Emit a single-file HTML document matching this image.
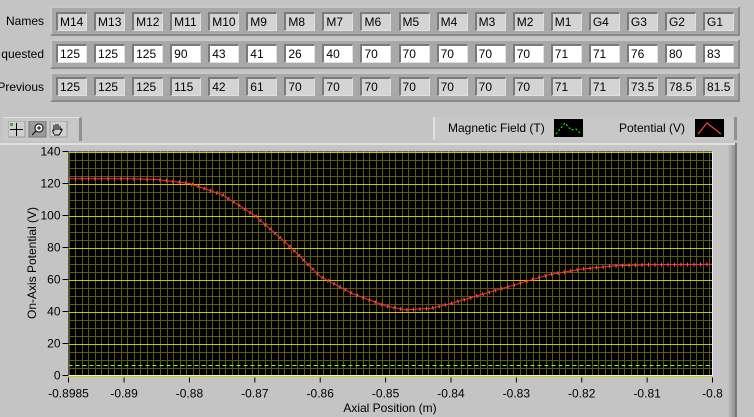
<!DOCTYPE html><html><head><meta charset="utf-8"><style>
body{margin:0;width:754px;height:417px;background:#c4c4c4;font-family:"Liberation Sans",sans-serif;font-size:12px;overflow:hidden;position:relative}
.a{position:absolute}
.fr{position:absolute;left:50px;width:690px;background:#a8a8a8;border-top:2px solid #c8c8c8;border-left:2px solid #c8c8c8;border-right:2px solid #8a8a8a;border-bottom:2px solid #8a8a8a;box-sizing:border-box}
.c{position:absolute;width:31px;height:19px;box-sizing:border-box;border-top:2px solid #7a7a7a;border-left:2px solid #7a7a7a;border-bottom:1px solid #e0e0e0;border-right:1px solid #e0e0e0;background:#d4d4d4;font-size:12px;line-height:16px;padding-left:2px;color:#000}
.w{background:#fff}
.lb{position:absolute;right:710px;font-size:12px;color:#000;white-space:nowrap}
</style></head><body>
<div class="lb" style="top:14px">Names</div>
<div class="lb" style="top:47px">quested</div>
<div class="lb" style="top:80px">Previous</div>
<div class="fr" style="top:6px;height:30px"></div>
<div class="fr" style="top:39px;height:30px"></div>
<div class="fr" style="top:72px;height:30px"></div>
<div id="cells"></div>
<div class="a" style="left:3px;top:117px;width:79px;height:24px;background:#c8c8c8;border-right:3px solid #909090;border-top:1px solid #e0e0e0;box-sizing:border-box"></div>
<svg class="a" style="left:8px;top:121px" width="70" height="17">
<rect x="0" y="0" width="17" height="16" fill="#d0d0d0" stroke="#999"/>
<path d="M8.5 2V15M2 8.5H15" stroke="#000"/><rect x="2" y="2" width="3" height="3" fill="#4a4"/>
<rect x="21" y="0" width="17" height="16" fill="#9a9a9a" stroke="#777"/>
<circle cx="31" cy="7" r="4" fill="#fff" stroke="#000"/><path d="M29 7h4M31 5v4M28 10l-4 4" stroke="#000"/>
<rect x="42" y="0" width="17" height="16" fill="#d0d0d0" stroke="#999"/>
<path d="M46 13c-2-3-1-5 0-4V4m2 5V3m2 6V3m2 6V5m0 4c2-2 3-1 1 2l-2 3h-5" fill="none" stroke="#000"/>
</svg>
<div class="a" style="left:433px;top:117px;width:304px;height:23px;background:#c8c8c8;border-left:2px solid #e0e0e0;border-right:3px solid #909090;box-sizing:border-box"></div>
<div class="a" style="left:448px;top:121px;font-size:12px">Magnetic Field (T)</div>
<div class="a" style="left:619px;top:121px;font-size:12px">Potential (V)</div>
<svg class="a" style="left:554px;top:119px" width="29" height="18"><rect width="29" height="18" fill="#000"/><polyline points="2,15 11,4 17,11 22,10 26,14" fill="none" stroke="#3f3" stroke-dasharray="2,2"/></svg>
<svg class="a" style="left:695px;top:119px" width="29" height="18"><rect width="29" height="18" fill="#000"/><polyline points="3,15 12,4 26,15" fill="none" stroke="#f44" stroke-width="1.2"/></svg>
<div class="a" style="left:0;top:143px;width:737px;height:274px;background:#c4c4c4;border-right:2px solid #7a7a7a;box-sizing:border-box"></div>
<div class="a" style="left:727px;top:145px;width:8px;height:272px;background:linear-gradient(90deg,#c8c8c8,#909090)"></div>
<div class="a" style="left:0;top:143px;width:735px;height:2px;background:#e0e0e0"></div>
<svg id="p" class="a" style="left:0;top:0" width="754" height="417"></svg>
<script>
var s='';
var names=["M14","M13","M12","M11","M10","M9","M8","M7","M6","M5","M4","M3","M2","M1","G4","G3","G2","G1"];
var req=[125,125,125,90,43,41,26,40,70,70,70,70,70,71,71,76,80,83];
var prv=[125,125,125,115,42,61,70,70,70,70,70,70,70,71,71,"73.5","78.5","81.5"];
for(var i=0;i<18;i++){var x=56+i*38.06;
s+='<div class="c" style="left:'+x+'px;top:12px">'+names[i]+'</div>';
s+='<div class="c w" style="left:'+x+'px;top:44px">'+req[i]+'</div>';
s+='<div class="c" style="left:'+x+'px;top:77px">'+prv[i]+'</div>';}
document.getElementById('cells').innerHTML=s;
var L=68.5,R=712.5,T=151.5,B=375.5;
function X(v){return L+(v+0.8985)/0.0985*(R-L)}function Y(v){return B-v/140*(B-T)}
var g='<rect x="'+L+'" y="'+T+'" width="'+(R-L)+'" height="'+(B-T)+'" fill="#000"/>';
for(var k=0;k<=98;k++){var v=-0.8985+k*0.001;if(v>-0.8)break;var x=Math.round(X(v))+0.5;var maj=Math.abs(Math.round(v*100)-v*100)<1e-6;
g+='<line x1="'+x+'" y1="'+T+'" x2="'+x+'" y2="'+B+'" stroke="'+(maj?'#c8c800':'#5a5a10')+'"/>';}
for(var k=0;k<=28;k++){var y=Math.round(Y(k*5))+0.5;g+='<line x1="'+L+'" y1="'+y+'" x2="'+R+'" y2="'+y+'" stroke="'+(k%4==0?'#c8c800':'#5a5a10')+'"/>';}
g+='<line x1="'+L+'" y1="365.5" x2="'+R+'" y2="365.5" stroke="#7f3" stroke-dasharray="4,3"/>';
var pts=[[-0.8985,123],[-0.89,123],[-0.885,122.5],[-0.88,120],[-0.875,113],[-0.87,100],[-0.865,82],[-0.86,62],[-0.855,51],[-0.85,43.5],[-0.847,41],[-0.843,42],[-0.84,45],[-0.835,51],[-0.83,57],[-0.825,63],[-0.82,66.5],[-0.815,68.5],[-0.81,69.2],[-0.8,69.5]];
var d='';pts.forEach(function(p,i){d+=(i?'L':'M')+X(p[0]).toFixed(1)+','+Y(p[1]).toFixed(1)});
g+='<path d="'+d+'" fill="none" stroke="#f33" stroke-width="1"/>';
g+='<path d="'+d+'" fill="none" stroke="#f55" stroke-width="4" stroke-dasharray="1,5.5"/>';
g+='<line x1="'+L+'" y1="'+T+'" x2="'+L+'" y2="'+B+'" stroke="#555"/><line x1="'+L+'" y1="'+B+'" x2="'+R+'" y2="'+B+'" stroke="#eee"/><line x1="'+R+'" y1="'+T+'" x2="'+R+'" y2="'+B+'" stroke="#eee"/>';
for(var k=0;k<=7;k++){var y=Y(k*20);g+='<line x1="'+(L-6)+'" y1="'+y+'" x2="'+L+'" y2="'+y+'" stroke="#000"/><text x="'+(L-8)+'" y="'+(y+4)+'" text-anchor="end" font-size="12">'+(k*20)+'</text>';}
var xl=[[-0.8985,"-0.8985"],[-0.89,"-0.89"],[-0.88,"-0.88"],[-0.87,"-0.87"],[-0.86,"-0.86"],[-0.85,"-0.85"],[-0.84,"-0.84"],[-0.83,"-0.83"],[-0.82,"-0.82"],[-0.81,"-0.81"],[-0.8,"-0.8"]];
xl.forEach(function(t){var x=X(t[0]);g+='<line x1="'+x+'" y1="'+(B+2)+'" x2="'+x+'" y2="'+(B+7)+'" stroke="#000"/><text x="'+x+'" y="'+(B+22)+'" text-anchor="middle" font-size="12">'+t[1]+'</text>'});
g+='<text x="390" y="412" text-anchor="middle" font-size="12">Axial Position (m)</text>';
g+='<text transform="translate(36,263) rotate(-90)" text-anchor="middle" font-size="12">On-Axis Potential (V)</text>';
document.getElementById('p').innerHTML=g;
</script>
</body></html>
